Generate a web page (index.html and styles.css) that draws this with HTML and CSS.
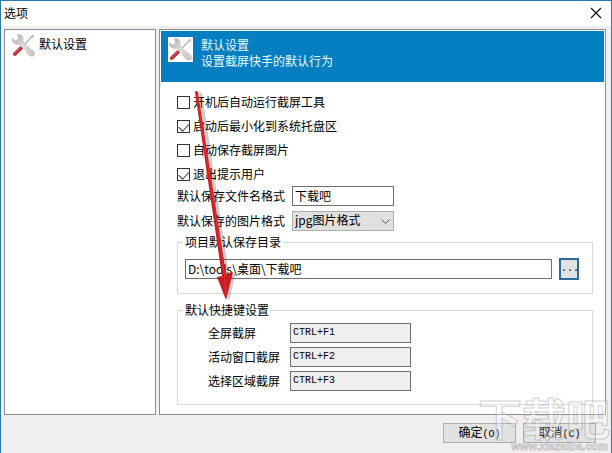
FILE: index.html
```
<!DOCTYPE html>
<html lang="zh-CN">
<head>
    <meta charset="UTF-8">
    <meta name="viewport" content="width=device-width, initial-scale=1.0">
    <title>选项</title>
    <link rel="stylesheet" href="styles.css">
</head>
<body>
    <svg class="symbols" aria-hidden="true">
        <defs>
            <linearGradient id="metal" x1="0" y1="0" x2="1" y2="1">
                <stop offset="0" stop-color="#aaa8aa"/>
                <stop offset="0.5" stop-color="#dddbdc"/>
                <stop offset="1" stop-color="#c4c2c4"/>
            </linearGradient>
        </defs>
        <symbol id="tools" viewBox="0 0 25 25">
            <path d="M21 3.5 L12 13.5" stroke="#b4b3b5" stroke-width="1.4"/>
            <path d="M19.5 3.5 L22 1.5 L23.5 3 L21.5 5.5Z" fill="#c4c3c5"/>
            <path d="M1.2 5.5 L4.5 8 L7.5 6 L6.5 1.5 C10.5 1 13 4 11.8 7.5 L16 13 L22 17.5 C25 20 23.5 23.5 21 23.3 C19 23.2 17 22 15.8 19.5 L13.5 15.5 L9 11.2 C4.5 12.5 0.5 9.5 1.2 5.5Z" fill="url(#metal)" stroke="#bdbbbd" stroke-width="0.5"/>
            <path d="M9.5 13 L12 15.5 L5.5 22 C3.5 23.8 0.8 22.5 2.3 20Z" fill="#b82b38"/>
            <path d="M9.5 14.5 L4 20.5" stroke="#db6c74" stroke-width="1"/>
        </symbol>
    </svg>

    <div class="window">
        <header class="titlebar">
            <h1>选项</h1>
            <button class="close" type="button" aria-label="关闭">
                <svg width="12" height="12" viewBox="0 0 12 12"><path d="M1 1 L11 11 M11 1 L1 11" stroke="#111" stroke-width="1.2"/></svg>
            </button>
        </header>

        <main class="panels">
            <nav class="sidebar">
                <a class="nav-item" href="#default">
                    <svg class="tool-icon"><use href="#tools"/></svg>
                    <span>默认设置</span>
                </a>
            </nav>

            <section class="settings" id="default">
                <div class="banner">
                    <svg class="tool-icon"><use href="#tools"/></svg>
                    <div>
                        <h2>默认设置</h2>
                        <p>设置截屏快手的默认行为</p>
                    </div>
                </div>

                <form class="options" id="options">
                    <label class="check"><input type="checkbox">开机后自动运行截屏工具</label>
                    <label class="check"><input type="checkbox" checked>启动后最小化到系统托盘区</label>
                    <label class="check"><input type="checkbox">自动保存截屏图片</label>
                    <label class="check"><input type="checkbox" checked>退出提示用户</label>

                    <div class="rows">
                        <label for="filename">默认保存文件名格式</label>
                        <input class="field" type="text" id="filename" value="下载吧">
                        <label for="format">默认保存的图片格式</label>
                        <div class="select">
                            <select class="field" id="format">
                                <option>jpg图片格式</option>
                            </select>
                            <svg class="chevron" width="9" height="6" viewBox="0 0 9 6"><path d="M0.5 0.5 L4.5 4.5 L8.5 0.5" fill="none" stroke="#555"/></svg>
                        </div>
                    </div>

                    <fieldset class="group">
                        <legend>项目默认保存目录</legend>
                        <div class="folder">
                            <input class="field" type="text" aria-label="项目默认保存目录" value="D:\tools\桌面\下载吧">
                            <button class="browse" type="button">...</button>
                        </div>
                    </fieldset>

                    <fieldset class="group">
                        <legend>默认快捷键设置</legend>
                        <div class="hotkeys">
                            <label for="full">全屏截屏</label>
                            <input class="field hotkey" type="text" id="full" value="CTRL+F1" readonly>
                            <label for="active">活动窗口截屏</label>
                            <input class="field hotkey" type="text" id="active" value="CTRL+F2" readonly>
                            <label for="area">选择区域截屏</label>
                            <input class="field hotkey" type="text" id="area" value="CTRL+F3" readonly>
                        </div>
                    </fieldset>
                </form>
            </section>
        </main>

        <footer class="actions">
            <button type="submit" form="options">确定<span class="key">(O)</span></button>
            <button type="button">取消<span class="key">(C)</span></button>
        </footer>

        <!-- 指向快捷键设置的箭头 -->
        <svg class="arrow" width="50" height="220" viewBox="0 0 50 220" aria-hidden="true">
            <path d="M6 1 L9 2 L36 184 L43 182 L36 210 L27 187 L31 186 L6 3Z" transform="translate(3 1)" fill="#000" opacity="0.2"/>
            <path d="M5 2 Q6 0 8 2 L36 184 L43 182 L36 210 L27 187 L32 186Z" fill="#c81c22"/>
            <path d="M7 4 L35 188 L36 206" fill="none" stroke="#e23236"/>
        </svg>

        <div class="watermark" aria-hidden="true">
            <span class="mark">下载吧</span>
            <span class="site">www.xiazaiba.com</span>
        </div>
    </div>
</body>
</html>
```
FILE: styles.css
```
* {
    margin: 0;
    padding: 0;
    box-sizing: border-box;
}

body {
    font-family: "Noto Sans CJK SC", sans-serif;
    font-size: 12px;
    line-height: 16px;
    color: #000;
}

input, select, button {
    font: inherit;
    color: inherit;
}

.symbols {
    position: absolute;
    width: 0;
    height: 0;
}

.window {
    position: relative;
    display: flex;
    flex-direction: column;
    min-height: 100vh;
    overflow: hidden;
    border: 1px solid #2f79a6;
    background: #f0eeef;
}

.titlebar {
    display: flex;
    align-items: center;
    justify-content: space-between;
    height: 25px;
    padding: 0 9px 2px 3px;
    background: #fff;
}

.titlebar h1 {
    font-size: 12px;
    font-weight: normal;
}

.close {
    display: flex;
    border: none;
    background: none;
}

.panels {
    display: flex;
    flex: 1;
    gap: 3px;
    padding: 3px 5px 0 3px;
}

.sidebar, .settings {
    border: 1px solid #8d8c99;
    background: #fff;
}

.sidebar {
    flex: 0 0 152px;
    padding: 3px 6px;
}

.nav-item {
    display: flex;
    align-items: flex-start;
    gap: 3px;
    color: #000;
    text-decoration: none;
}

.nav-item span {
    margin-top: 3px;
}

.tool-icon {
    flex: none;
    width: 25px;
    height: 25px;
}

.settings {
    flex: 1;
    padding: 1px;
}

.banner {
    display: flex;
    align-items: flex-start;
    gap: 8px;
    height: 51px;
    padding: 6px 7px;
    background: #037ec1;
    color: #e6fbff;
}

.banner .tool-icon {
    background: #fff;
}

.banner h2 {
    font-size: 12px;
    font-weight: normal;
}

.options {
    padding: 8px 11px 8px 16px;
}

.check {
    display: flex;
    align-items: center;
    gap: 3px;
    height: 24px;
}

.check input {
    appearance: none;
    width: 13px;
    height: 13px;
    border: 1px solid #333;
    background: #fff;
}

.check input:checked::before {
    content: "";
    display: block;
    width: 9px;
    height: 5px;
    margin: 2px 1px;
    border: solid #444;
    border-width: 0 0 1px 1px;
    transform: rotate(-45deg);
}

.rows {
    display: grid;
    grid-template-columns: 115px 102px;
    align-items: center;
    row-gap: 5px;
    margin-bottom: 3px;
    white-space: nowrap;
}

.field {
    width: 100%;
    height: 20px;
    padding: 0 2px 2px;
    border: 1px solid #6e6e6e;
    border-radius: 0;
    background: #fff;
    outline: none;
}

.select {
    position: relative;
}

select.field {
    appearance: none;
    display: block;
    border-color: #adadad;
    background: #e2e1e2;
}

.chevron {
    position: absolute;
    right: 4px;
    top: 8px;
}

.group {
    min-width: 0;
    padding: 0 7px 13px;
    border: 1px solid #d9d8d9;
}

.group + .group {
    margin-top: 8px;
}

.group legend {
    padding: 0 2px;
    margin-left: -2px;
}

.folder {
    display: flex;
    align-items: center;
    gap: 7px;
    padding: 8px 6px 0 0;
}

.browse {
    flex: none;
    width: 20px;
    height: 22px;
    border: 2px solid #2c6a9b;
    background: #e1e1e1;
    font-family: "Liberation Mono", monospace;
    font-size: 10px;
    line-height: 16px;
}

.hotkeys {
    display: grid;
    grid-template-columns: 82px 121px;
    align-items: center;
    row-gap: 4px;
    padding: 5px 0 0 23px;
}

.hotkey {
    background: #f0eeef;
    font-family: "Liberation Mono", monospace;
    font-size: 10px;
}

.actions {
    display: flex;
    justify-content: flex-end;
    gap: 7px;
    padding: 8px 15px 10px;
}

.actions button {
    width: 73px;
    height: 20px;
    border: 1px solid #adadad;
    background: #e2e1e2;
    line-height: 16px;
}

.key {
    font-family: "Liberation Mono", monospace;
    font-size: 10px;
}

.arrow {
    position: absolute;
    left: 189px;
    top: 89px;
    pointer-events: none;
}

.watermark {
    position: absolute;
    right: 1px;
    bottom: 0;
    display: flex;
    flex-direction: column;
    align-items: flex-end;
    font-weight: bold;
    color: rgba(255, 255, 255, 0.3);
    -webkit-text-stroke: 1px rgba(150, 148, 150, 0.45);
    pointer-events: none;
}

.mark {
    font-size: 44px;
    line-height: 46px;
}

.site {
    padding-right: 2px;
    font-family: "Liberation Sans", sans-serif;
    font-size: 11px;
    line-height: 13px;
}
```
